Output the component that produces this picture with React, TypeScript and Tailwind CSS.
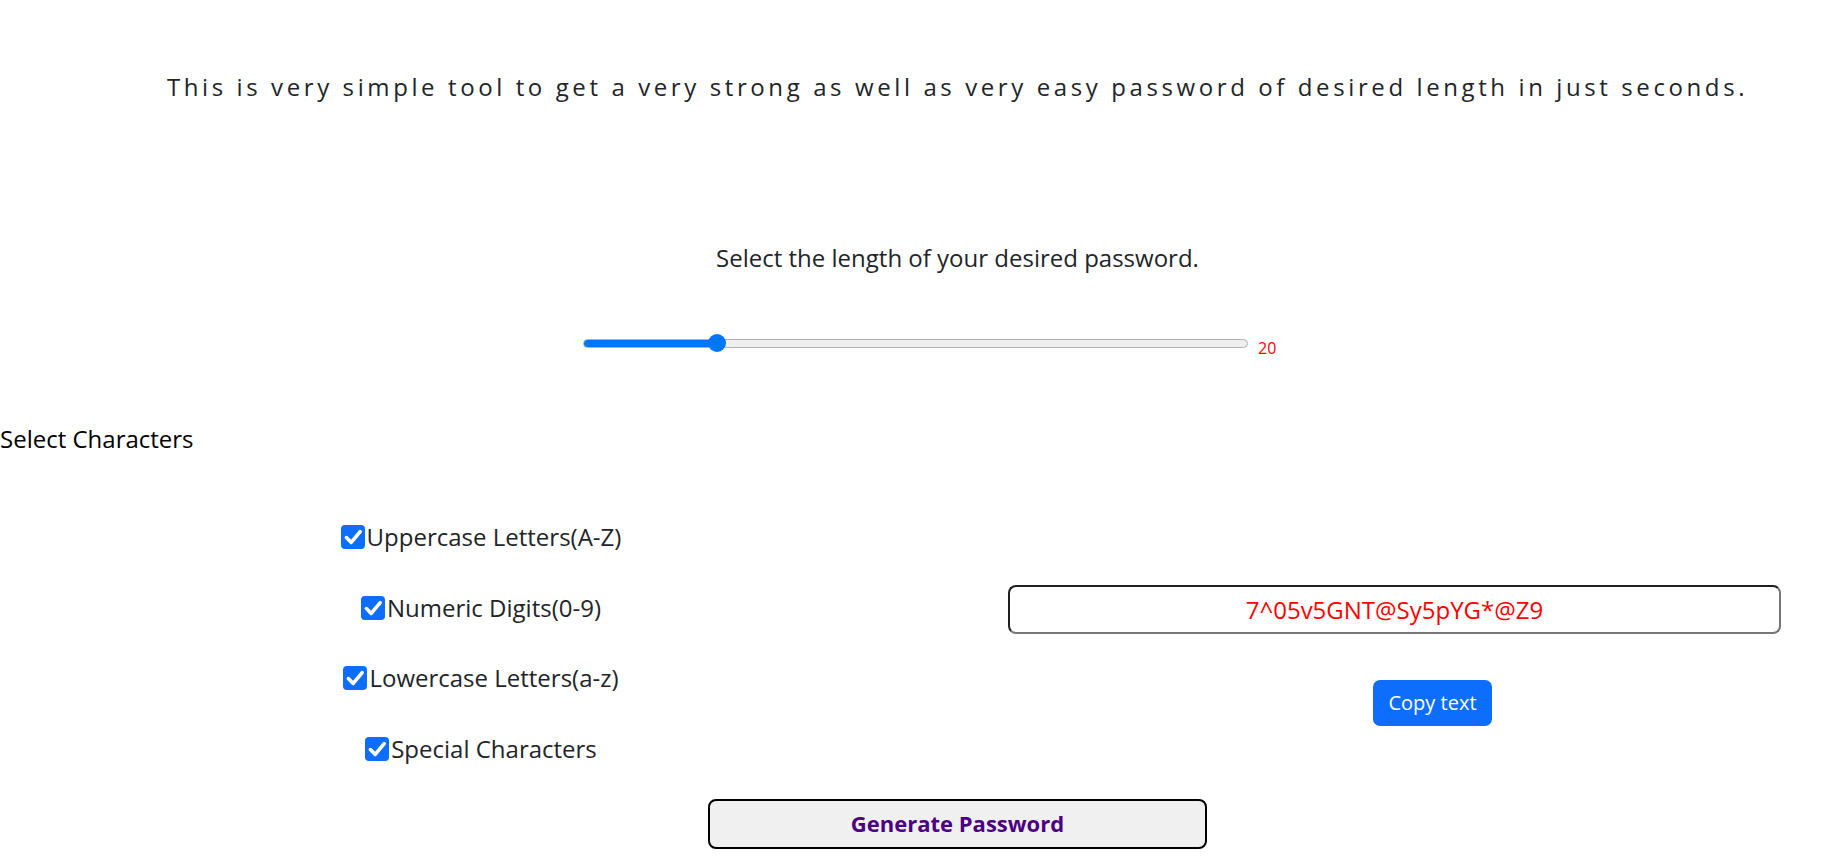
import { useState } from "react";

const options = [
  { id: "upper", label: "Uppercase Letters(A-Z)" },
  { id: "digits", label: "Numeric Digits(0-9)" },
  { id: "lower", label: "Lowercase Letters(a-z)" },
  { id: "special", label: "Special Characters" },
];

function CheckBox({ checked, onToggle }: { checked: boolean; onToggle: () => void }) {
  return (
    <button
      onClick={onToggle}
      className={`flex h-6 w-6 shrink-0 items-center justify-center rounded-[4px] ${
        checked ? "bg-[#0d6efd]" : "border border-[#9ca3af] bg-white"
      }`}
    >
      {checked && (
        <svg viewBox="0 0 20 20" className="h-6 w-6">
          <path d="M4.5 10.5 8.5 14.5 16 5.5" fill="none" stroke="#fff" strokeWidth="3" strokeLinecap="round" strokeLinejoin="round" />
        </svg>
      )}
    </button>
  );
}

export default function App() {
  const [length] = useState(20);
  const [checked, setChecked] = useState<Record<string, boolean>>({
    upper: true,
    digits: true,
    lower: true,
    special: true,
  });
  const password = "7^05v5GNT@Sy5pYG*@Z9";

  const trackWidth = 665;
  const thumb = 18;
  const thumbCenter = thumb / 2 + ((length - 1) / 99) * (trackWidth - thumb);

  return (
    <div className="min-h-screen bg-white font-['Open_Sans',sans-serif] text-[#212529]">
      <p className="pl-[88px] pt-[69px] text-center text-[24px] font-normal leading-[36px] tracking-[3.6px]">
        This is very simple tool to get a very strong as well as very easy password of desired length in just seconds.
      </p>

      <p className="mt-[135px] pl-[88px] text-center text-[24px] leading-[36px]">
        Select the length of your desired password.
      </p>

      <div className="mt-[57px] flex h-5 items-center pl-[583px]">
        <div className="relative h-[9px] w-[665px] rounded-full border border-[#b2b2b2] bg-[#efefef]">
          <div className="h-full rounded-full bg-[#0075ff]" style={{ width: thumbCenter }} />
          <div
            className="absolute top-1/2 h-[18px] w-[18px] -translate-y-1/2 rounded-full bg-[#0075ff]"
            style={{ left: thumbCenter - thumb / 2 }}
          />
        </div>
        <span className="ml-[10px] mt-[10px] text-[16px] leading-6 text-[#ff0000]">{length}</span>
      </div>

      <p className="mt-[68px] text-[24px] leading-[36px] text-black">Select Characters</p>

      <div className="mt-[62px] grid grid-cols-[962px_1fr]">
        <div className="flex flex-col items-center gap-[34.5px]">
          {options.map((o) => (
            <label key={o.id} className="flex h-9 items-center gap-[2px] text-[24px] leading-[36px]">
              <CheckBox
                checked={checked[o.id]}
                onToggle={() => setChecked((c) => ({ ...c, [o.id]: !c[o.id] }))}
              />
              <span>{o.label}</span>
            </label>
          ))}
        </div>

        <div className="flex flex-col items-center pt-[66px]">
          <div className="flex h-[49px] w-[773px] items-center justify-center rounded-[8px] border-2 border-b-[#767676] border-l-[#1f1f1f] border-r-[#767676] border-t-[#1f1f1f] text-[24px] text-[#ff0000]">
            {password}
          </div>
          <div className="mt-[46px] pl-[76px]">
            <button className="h-[46px] rounded-[7px] bg-[#0d6efd] px-[15px] text-[20px] text-white">
              Copy text
            </button>
          </div>
        </div>
      </div>

      <div className="mt-[32px] flex justify-center pl-[88px]">
        <button className="h-[50px] w-[499px] rounded-[8px] border-2 border-black bg-[#f0f0f0] text-[22px] font-bold text-[#4b0082]">
          Generate Password
        </button>
      </div>
    </div>
  );
}
